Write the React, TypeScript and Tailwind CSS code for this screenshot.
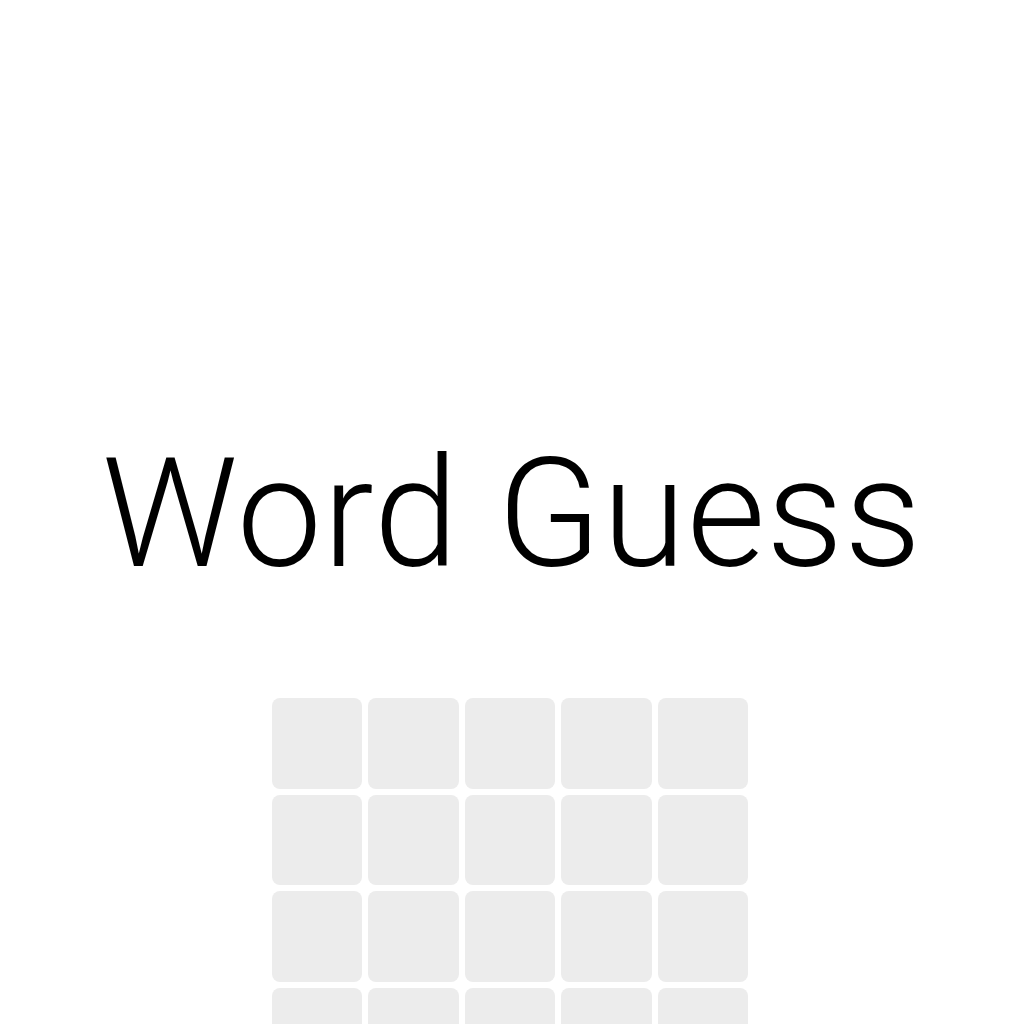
import React from 'react';

const ROWS = 6;
const COLS = 5;

const App: React.FC = () => {
  const tiles = Array.from({ length: ROWS * COLS }, (_, i) => i);

  return (
    <div className="bg-white flex flex-col items-center pt-[438px] overflow-hidden" style={{ height: 1024 }}>
      <h1 className="font-['Roboto',sans-serif] font-light text-[152px] leading-none text-black tracking-[1px]">
        Word Guess
      </h1>
      <div className="mt-[108px] mr-[4px] grid grid-cols-5 gap-[6px] w-[477px]">
        {tiles.map((i) => (
          <div key={i} className="aspect-square rounded-[8px] bg-[#ececec]" />
        ))}
      </div>
    </div>
  );
};

export default App;
